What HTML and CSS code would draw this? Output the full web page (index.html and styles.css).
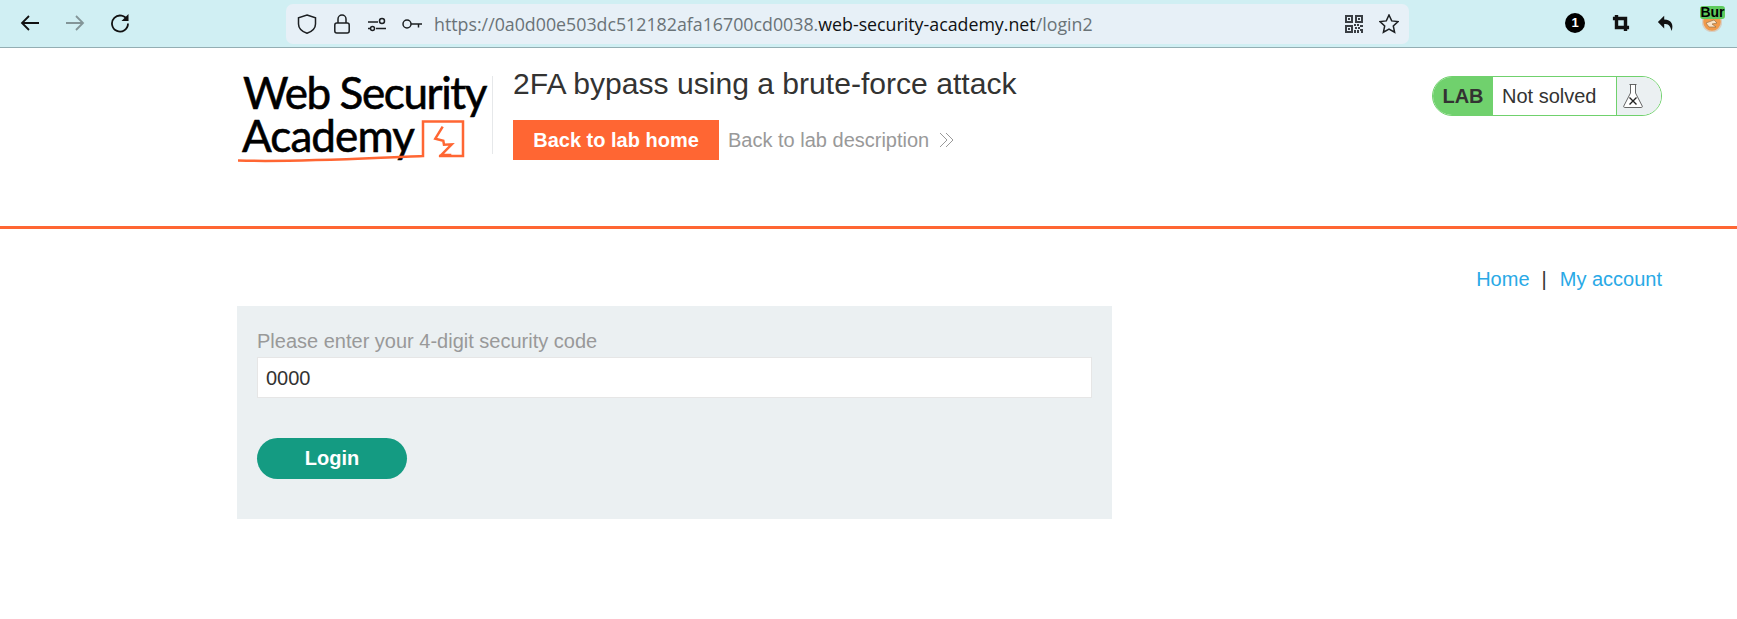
FILE: index.html
```html
<!DOCTYPE html>
<html lang="en">
<head>
<meta charset="utf-8">
<title>2FA bypass using a brute-force attack</title>
<link rel="stylesheet" href="styles.css">
</head>
<body>
<div class="toolbar">
  <div class="nav">
    <svg class="ico" viewBox="0 0 20 20"><path d="M19 10H2M9 3l-7 7 7 7" class="st"/></svg>
    <svg class="ico dim" viewBox="0 0 20 20"><path d="M1 10h17M11 3l7 7-7 7" class="st"/></svg>
    <svg class="ico" viewBox="0 0 20 20"><path d="M17.4 7.500A8 8 0 1 0 18 10.500" class="st"/><path d="M18.500 1v7h-7z" class="fl"/></svg>
  </div>
  <div class="urlbar">
    <svg class="uico" viewBox="0 0 20 20"><path d="M10 1l8.500 2.800v6.200c0 4.500-3.500 7.500-8.500 9.300-5-1.800-8.500-4.800-8.500-9.300V3.800z" class="st thin"/></svg>
    <svg class="uico" viewBox="0 0 20 20"><rect x="2.800" y="9" width="14.400" height="10" rx="2" class="st thin"/><path d="M6 9V5a4 4 0 0 1 8 0v4" class="st thin"/></svg>
    <svg class="uico" viewBox="0 0 20 20"><path d="M1 14.500h2M9 14.500h10M1 8h10" class="st thin"/><circle cx="5.500" cy="14.500" r="2" class="st thin"/><circle cx="15" cy="7" r="2.500" class="st thin"/></svg>
    <svg class="uico" viewBox="0 0 20 20"><circle cx="5" cy="10" r="4" class="st thin"/><path d="M9 10H20M16.500 10v3.500" class="st thin"/></svg>
    <div class="url">https://0a0d00e503dc512182afa16700cd0038.<span class="domain">web-security-academy.net</span>/login2</div>
    <svg class="qr" viewBox="0 0 18 18"><path d="M0 0h8v8H0zM2 2v4h4V2zM10 0h8v8h-8zM12 2v4h4V2zM0 10h8v8H0zM2 12v4h4v-4zM3 3h2v2H3zM13 3h2v2h-2zM3 13h2v2H3zM9 9h2v2H9zM12 9h2v2h-2zM15 10h3v2h-3zM10 12h2v2h-2zM13 12h2v2h-2zM9 15h2v3H9zM12 15h2v3h-2zM15 14h3v2h-3zM16 16h2v2h-2z" fill="#3a3f44" fill-rule="evenodd"/></svg>
    <svg class="star" viewBox="0 0 20 20"><path d="M10 1l2.700 5.900 6.300.7-4.700 4.300 1.300 6.300L10 15.100 4.400 18.200l1.300-6.300L1 7.600l6.300-.7z" class="st thin"/></svg>
  </div>
  <div class="exts">
    <span class="ext-one">1</span>
    <svg class="ext" viewBox="0 0 20 20"><path d="M5 1v14h14M1 5h14v14" fill="none" stroke="#111" stroke-width="3.800"/></svg>
    <svg class="ext" viewBox="0 0 20 20"><path d="M8 2L1 9l7 7v-5c4 0 7 1 8 8 3-7 0-13-8-13z" fill="#111"/></svg>
    <div class="burp">
      <svg class="burp-icon" viewBox="0 0 20 20"><circle cx="10" cy="10" r="9.500" fill="#f19a4a" stroke="#d6cfc4" stroke-width="1.500"/><path d="M4 11l8-3 3 3-5 1 4 3H7z" fill="#fbe3c6" stroke="#8a6a40" stroke-width=".6"/></svg>
      <span class="burp-tag">Bur</span>
    </div>
  </div>
</div>

<header class="lab-header">
  <div class="logo">
    <div class="logo-text logo-first">Web Security</div>
    <div class="logo-text">Academy</div>
    <svg class="logo-mark" viewBox="0 0 250 92" width="250" height="92">
      <path d="M1 85.500C60 87.500 130 83 186 81V46.500h40V81h-24" class="logo-line"/>
      <path d="M205.700 51.700l-7.400 12 8 2 .7 4 7.700-.4-10.400 10.700h10" class="logo-line"/>
    </svg>
  </div>
  <div class="title-block">
    <h2 class="title">2FA bypass using a brute-force attack</h2>
    <div class="links">
      <a class="home-btn">Back to lab home</a>
      <a class="desc-link">Back to lab description</a>
      <svg class="chev" viewBox="0 0 16 16"><path d="M1 1l7 7-7 7M7 1l7 7-7 7" fill="none" stroke="#999" stroke-width="1"/></svg>
    </div>
  </div>
  <div class="badge">
    <span class="badge-lab">LAB</span>
    <span class="badge-status">Not solved</span>
    <span class="badge-flask">
      <svg viewBox="0 0 20 24" width="20" height="24"><path d="M6.500.5h7M7.500.5V9L.8 22c-.3 1 0 1.500 1 1.500h16.400c1 0 1.300-.5 1-1.500L12.500 9V.5" fill="#fff" stroke="#555" stroke-width=".9"/><path d="M6.500 13.500l7 7M13.500 13.500l-7 7" stroke="#222" stroke-width="1.400"/></svg>
    </span>
  </div>
</header>

<nav class="top-links">
  <a class="link">Home</a><span class="sep">|</span><a class="link">My account</a>
</nav>

<main>
  <form class="login-form">
    <label class="field-label">Please enter your 4-digit security code</label>
    <input class="field" type="text" value="0000">
    <button class="login-btn" type="button">Login</button>
  </form>
</main>
</body>
</html>
```
FILE: styles.css
```css
* { box-sizing: border-box; }
html, body { margin: 0; padding: 0; }
body {
  background: #fff;
  color: #333332;
  font-family: "Liberation Sans", Arial, sans-serif;
  font-size: 20px;
  height: 619px;
  overflow: hidden;
}
.toolbar {
  height: 48px;
  background: #d0eff3;
  border-bottom: 1px solid #93aeb3;
  display: flex;
  align-items: center;
  padding-bottom: 1px;
}
.nav { display: flex; gap: 25px; padding-left: 20px; width: 286px; }
.ico { width: 20px; height: 20px; }
.dim { opacity: .4; }
.st { fill: none; stroke: #111; stroke-width: 1.800; }
.thin { stroke-width: 1.500; stroke: #1c1f22; }
.fl { fill: #111; }
.urlbar {
  width: 1123px;
  height: 40px;
  margin-top: 1px;
  background: #e7f0f7;
  border-radius: 7px;
  display: flex;
  align-items: center;
  padding-left: 11px;
}
.uico { width: 20px; height: 20px; margin-right: 15px; }
.url {
  font-family: "Open Sans", sans-serif;
  font-size: 17.800px;
  color: #6a7377;
  flex: 1;
  margin-left: -3px;
  white-space: nowrap;
}
.domain { color: #0f1113; }
.qr { width: 18px; height: 18px; margin-right: 16px; }
.star { width: 20px; height: 20px; margin-right: 10px; }
.exts { display: flex; align-items: center; padding-left: 156px; gap: 27px; }
.ext-one {
  width: 20px; height: 20px; border-radius: 50%;
  background: #000; color: #fff;
  font: bold 13px/20px "Liberation Sans", sans-serif;
  text-align: center;
}
.ext { width: 18px; height: 18px; }
.burp { position: relative; width: 25px; height: 26px; margin-left: -2px; margin-top: -9px; }
.burp-icon {
  position: absolute; left: 2px; bottom: 0; width: 20px; height: 20px;
}
.burp-tag {
  position: absolute; left: 0; top: 0; width: 25px; height: 13px;
  background: #5ecb5e; border-radius: 3px;
  font: bold 14px/13px "Liberation Sans", sans-serif; color: #000; text-align: center;
}
.lab-header {
  height: 181px;
  border-bottom: 3px solid #ff6633;
  padding: 0 75px 0 237px;
  display: flex;
  align-items: flex-start;
}
.logo {
  width: 256px;
  height: 96px;
  margin-top: 23px;
  padding-left: 5px;
  flex: none;
  position: relative;
}
.logo::after {
  content: "";
  position: absolute; right: 0; top: 5px; width: 1px; height: 78px; background: #e6e8ea;
}
.logo-text {
  font-family: Lato, sans-serif;
  font-size: 44px;
  line-height: 43px;
  letter-spacing: -.9px;
  color: #000;
  -webkit-text-stroke: .6px #000;
  white-space: nowrap;
}
.logo-first { letter-spacing: -1.400px; margin-left: 1px; }
.logo-mark { position: absolute; left: 0; top: 4px; }
.logo-line { fill: none; stroke: #ff6633; stroke-width: 2.500; }
.title-block { margin-left: 20px; flex: 1; padding-top: 20px; }
.title { margin: 0; font-size: 30.100px; font-weight: 400; line-height: 32px; }
.links { display: flex; align-items: center; margin-top: 20px; }
.home-btn {
  width: 206px; height: 40px;
  background: #ff6633; color: #fff;
  font-weight: 700;
  display: flex; align-items: center; justify-content: center;
}
.desc-link { margin-left: 9px; color: #999999; }
.chev { width: 16px; height: 16px; margin-left: 10px; }
.badge {
  width: 230px; height: 40px;
  margin-top: 28px;
  border: 1px solid #70d16d;
  border-radius: 20px;
  display: flex;
  overflow: hidden;
  flex: none;
}
.badge-lab {
  width: 60px; background: #70d16d; font-weight: 700;
  display: flex; align-items: center; justify-content: center;
}
.badge-status {
  width: 124px; padding-left: 9px; line-height: 38px;
  border-right: 1px solid #70d16d;
}
.badge-flask {
  flex: 1; background: #ebf0f2;
  display: flex; align-items: center; justify-content: center;
  padding-right: 12px;
}
.top-links {
  display: flex; justify-content: flex-end; align-items: flex-start;
  padding: 39px 75px 0 0;
  height: 77px;
  line-height: 23px;
}
.link { color: #29a9e6; }
.sep { margin: 0 13px 0 12px; }
main { padding: 0 0 0 237px; }
.login-form {
  width: 875px; height: 213px;
  margin: 0;
  background: #ebf0f2;
  padding: 20px;
  display: flex;
  flex-direction: column;
  align-items: flex-start;
}
.field-label { color: #999999; line-height: 31px; }
.field {
  width: 100%; height: 41px;
  border: 1px solid #e6e6e6;
  background: #fff;
  padding: 1px 8px 0;
  font-family: "Liberation Sans", sans-serif;
  font-size: 20px;
  color: #333332;
}
.login-btn {
  margin-top: 40px;
  width: 150px; height: 41px;
  border: 0; border-radius: 21px;
  background: #149b82; color: #fff;
  font-family: "Liberation Sans", sans-serif;
  font-weight: 700; font-size: 20px;
}
```
